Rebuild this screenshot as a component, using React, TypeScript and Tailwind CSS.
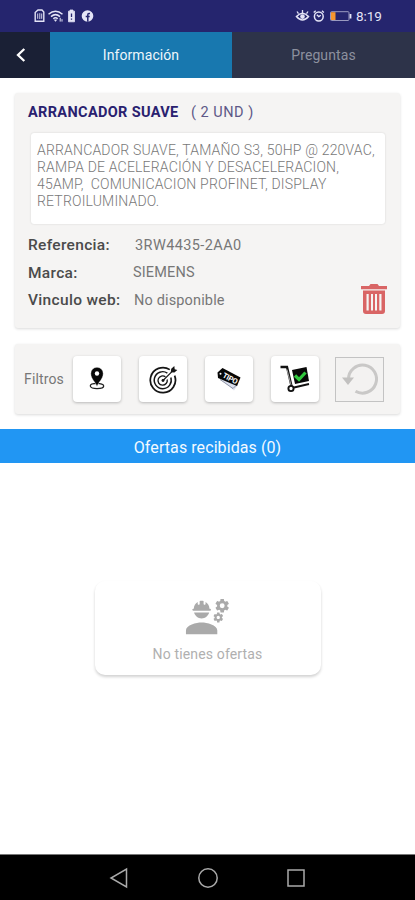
import React from 'react';
import { MdEngineering } from 'react-icons/md';

function StatusBar() {
  return (
    <div className="flex h-8 items-center bg-[#25256e] pl-[34px] pr-[33px] text-[#e4e4f6]">
      <svg width="62" height="16" viewBox="0 0 62 16" fill="none" stroke="currentColor">
        <path d="M1.200 4.500 4 2h4l1.800 2v9.200H1.200z" strokeWidth="1.400" />
        <path d="M3.700 5.500v5.300M5.800 5.200v5.800M7.700 5.500v5.300" strokeWidth=".9" />
        <path d="M14.500 6.200q7-6 14 0M17 8.600q4.500-4 9 0M19.300 10.800q2.200-2 4.400 0" strokeWidth="1.500" />
        <path d="m20.200 11.800 1.300 1.800 1.300-1.800z" fill="currentColor" strokeWidth=".4" />
        <path d="M26.200 9.800v3.800M28 11.200v2.400" strokeWidth="1" />
        <path d="M36 2h3v1.200h1.500v10.600h-6V3.200H36z" fill="currentColor" strokeWidth=".8" />
        <path d="M37.500 5.500v3.500M37.500 10.500v1.200" stroke="#25256e" strokeWidth="1.300" />
        <circle cx="53.500" cy="8" r="5.800" fill="currentColor" stroke="none" />
        <path d="M53.800 13.800V7q0-1.800 2.200-1.600M51.700 8.600h4" stroke="#25256e" strokeWidth="1.500" />
      </svg>
      <div className="flex-1" />
      <svg width="60" height="16" viewBox="0 0 60 16" fill="none" stroke="currentColor">
        <path d="M1.500 8.500q6-6.500 12 0-6 7-12 0z" strokeWidth="1.600" />
        <circle cx="7.500" cy="8.600" r="2.300" fill="currentColor" stroke="none" />
        <path d="m2 3.500 1.500 2.200M7.500 2v3M13 3.500l-1.500 2.200" strokeWidth="1.300" />
        <circle cx="23.800" cy="8.500" r="4.400" strokeWidth="1.500" />
        <path d="m18.700 4.500 2-1.800M28.900 4.500l-2-1.800M21.800 6.800l2 1.800 2-1.300" strokeWidth="1.300" />
        <rect x="35.500" y="3.700" width="18.500" height="8.800" rx="1" stroke="#9a9ac0" />
        <path d="M36 4.200h4.500v7.800H36z" fill="#f7962e" stroke="none" />
        <path d="M55.500 6v4.500" strokeWidth="1.800" />
      </svg>
      <span className="ml-px w-[26px] whitespace-nowrap text-[13.500px] leading-4 tracking-[-0.100px]">8:19</span>
    </div>
  );
}

function Tabs() {
  return (
    <div className="flex h-[46px] text-[14px]">
      <div className="flex w-[50px] items-center bg-[#1a2035] pl-[15px]">
        <svg width="12" height="16" viewBox="0 0 12 16" fill="none" stroke="#fff" strokeWidth="2.300">
          <path d="M9.300 2 3 8l6.300 6" />
        </svg>
      </div>
      <div className="flex w-[182px] items-center justify-center bg-[#1878af] text-[#edf6fb]">
        <span className="tracking-[0.080px]">Información</span>
      </div>
      <div className="flex flex-1 items-center justify-center bg-[#2d3349] text-[#8c909e]">
        <span className="tracking-[0.100px]">Preguntas</span>
      </div>
    </div>
  );
}

function Detail({ label, children, labelClass }: { label: string; children: React.ReactNode; labelClass: string }) {
  return (
    <div className="flex h-[27.500px] items-center whitespace-nowrap">
      <span className={'text-[15.500px] font-medium tracking-[0.320px] text-[#4b4b4b] ' + labelClass}>{label}</span>
      <span className="text-[14.500px] tracking-[0.150px] text-[#777]">{children}</span>
    </div>
  );
}

function TrashIcon() {
  return (
    <svg width="28" height="32" viewBox="0 0 28 32" fill="#d96565">
      <path d="M1 3h8l1.500-2h7L19 3h8v3.200H1z" />
      <path fillRule="evenodd" d="M3 7.500h22V28q0 3-3 3H6q-3 0-3-3zM6.500 11v16.500h2.200V11zm4.500 0v16.500h2V11zm4 0v16.500h2V11zm4.300 0v16.500h2.200V11z" />
    </svg>
  );
}

function PinIcon() {
  return (
    <svg width="16" height="24" viewBox="0 0 16 24">
      <ellipse cx="8" cy="19" rx="6.700" ry="2.600" fill="none" stroke="#222" strokeWidth="1.300" />
      <path d="M8 19.500C6.500 15 1.800 12 1.800 6.500a6.200 6.200 0 0 1 12.400 0C14.200 12 9.500 15 8 19.500z" fill="#080808" stroke="#fff" strokeWidth=".4" />
      <circle cx="8" cy="6.500" r="2.200" fill="#fff" />
    </svg>
  );
}

function TargetIcon() {
  return (
    <svg width="29" height="29" viewBox="0 0 30 30" fill="none" stroke="#151515">
      <path d="M21.500 4.800A13 13 0 1 0 26.500 11" strokeWidth="1.800" />
      <path d="M19 8.300A8.800 8.800 0 1 0 22.600 13" strokeWidth="1.500" />
      <path d="M17 12.200A4.800 4.800 0 1 0 18.800 15" strokeWidth="1.400" />
      <circle cx="14.500" cy="16" r="1.500" fill="#151515" stroke="none" />
      <path d="m14.500 16 10-10" strokeWidth="1.200" />
      <path d="M22.500 7.500 23 4l3.200-3 .4 3.300 2.700.8-3 2.700z" fill="#151515" stroke="none" />
    </svg>
  );
}

function TagIcon() {
  return (
    <svg width="26" height="26" viewBox="0 0 26 26">
      <path d="m4 13 14 11.500 4-5.500L7 10z" fill="#dce0ed" />
      <path d="m4 13.500 13 9 3-3" fill="none" stroke="#687087" strokeWidth=".7" />
      <path d="M1.500 6.500 6.500 2 24.500 11.500 21 20 2 12z" fill="#070707" />
      <circle cx="4.500" cy="7.800" r="1" fill="#fff" />
      <text x="6" y="11" transform="rotate(28 6 11)" fontSize="7.500" fontWeight="700" fill="#fff" letterSpacing="-.3">TIPO</text>
    </svg>
  );
}

function CartIcon() {
  return (
    <svg width="30" height="28" viewBox="0 0 30 28" fill="none" stroke="#111">
      <path d="M.5 2h6.500L11.500 21" strokeWidth="2.300" />
      <path d="M7 4.500 11 20" stroke="#fff" strokeWidth=".6" />
      <path d="m12 5 14.500-3 2.500 14-14 3z" fill="#080808" stroke="none" />
      <path d="m14 22.500 15-3.500" strokeWidth="1.800" />
      <circle cx="11" cy="23.500" r="2.600" strokeWidth="1.900" />
      <path d="m15 10.500 4 4 6.500-7" stroke="#30c83d" strokeWidth="3.200" />
    </svg>
  );
}

function FilterButton({ children }: { children: React.ReactNode }) {
  return (
    <div className="flex h-[46px] w-[48px] items-center justify-center rounded-[4px] bg-white shadow-[0_1px_3px_rgba(0,0,0,0.25)]">
      {children}
    </div>
  );
}

export default function App() {
  return (
    <div className="flex h-[900px] w-[415px] flex-col overflow-hidden bg-white font-['Roboto','Liberation_Sans',sans-serif]">
      <StatusBar />
      <Tabs />

      <section className="mx-[15px] mt-[15px] h-[235px] rounded-[3px] bg-[#f5f4f3] px-[13px] pt-[10px] shadow-[0_1px_3px_rgba(0,0,0,0.15)]">
        <h1 className="flex h-5 items-center whitespace-nowrap text-[14.500px] text-[#29216f]">
          <span className="w-[163px] font-bold tracking-[0.350px]">ARRANCADOR SUAVE</span>
          <span className="tracking-[0.500px] text-[#5e5887]">( 2 UND )</span>
        </h1>
        <div className="ml-[3px] mt-[10px] h-[91px] w-[354px] rounded-[3px] bg-white pl-[6px] pt-[9px] text-[14px] font-light leading-[17px] tracking-[0.180px] text-[#787878] shadow-[0_0_2px_rgba(0,0,0,0.15)]">
          <p className="whitespace-pre">ARRANCADOR SUAVE, TAMAÑO S3, 50HP @ 220VAC,</p>
          <p className="whitespace-pre">RAMPA DE ACELERACIÓN Y DESACELERACION,</p>
          <p className="whitespace-pre">45AMP,  COMUNICACION PROFINET, DISPLAY</p>
          <p className="whitespace-pre">RETROILUMINADO.</p>
        </div>
        <div className="mt-[8px] flex justify-between">
          <div>
            <Detail label="Referencia:" labelClass="w-[107px]">
              <span className="tracking-[0.400px]">3RW4435-2AA0</span>
            </Detail>
            <Detail label="Marca:" labelClass="w-[105px]">SIEMENS</Detail>
            <Detail label="Vinculo web:" labelClass="w-[106px]">No disponible</Detail>
          </div>
          <div className="-mr-px pt-[51px]"><TrashIcon /></div>
        </div>
      </section>

      <section className="mx-[15px] mt-[16px] flex h-[70px] items-center rounded-[3px] bg-[#f5f4f3] pl-[9px] shadow-[0_1px_3px_rgba(0,0,0,0.15)]">
        <span className="w-[49px] whitespace-nowrap text-[14px] tracking-[0.150px] text-[#777]">Filtros</span>
        <div className="flex gap-[18px]">
          <FilterButton><PinIcon /></FilterButton>
          <FilterButton><TargetIcon /></FilterButton>
          <FilterButton><TagIcon /></FilterButton>
          <FilterButton><CartIcon /></FilterButton>
        </div>
        <div className="ml-[16px] flex h-[45px] w-[49px] items-center justify-center border border-[#c3c3c3] bg-[#f3f2f1]">
          <svg width="36" height="34" viewBox="0 0 36 34" fill="none">
            <path d="M6.500 17A14 14 0 1 1 13.500 29.200" stroke="#c9c8c7" strokeWidth="3" />
            <path d="M0 15.500h12L6 23z" fill="#c2c1c0" />
          </svg>
        </div>
      </section>

      <div className="mt-[15px] flex h-[34px] items-center justify-center bg-[#2196f3] pt-[3px] text-[16px] text-[#f4faff]">
        <span className="whitespace-nowrap tracking-[0.080px]">Ofertas recibidas (0)</span>
      </div>

      <section className="mx-auto mt-[118px] flex h-[94px] w-[226px] flex-col items-center rounded-[10px] bg-white pt-[12px] shadow-[0_2px_3px_rgba(0,0,0,0.180)]">
        <MdEngineering className="h-[47px] w-[47px] text-[#aaa]" />
        <span className="mt-1 text-[14px] leading-5 tracking-[0.150px] text-[#b0b0b0]">No tienes ofertas</span>
      </section>

      <nav className="mt-auto flex h-[46px] items-center justify-between border-t border-[#777] bg-black pl-[109px] pr-[109px]">
        <svg width="20" height="22" viewBox="0 0 20 22" fill="none" stroke="#aaa" strokeWidth="1.500"><path d="M17.500 2v18L2 11z" /></svg>
        <svg width="22" height="22" viewBox="0 0 22 22" fill="none" stroke="#aaa" strokeWidth="1.500"><circle cx="11" cy="11" r="9.200" /></svg>
        <svg width="20" height="20" viewBox="0 0 20 20" fill="none" stroke="#aaa" strokeWidth="1.500"><path d="M2 2h16v16H2z" /></svg>
      </nav>
    </div>
  );
}
